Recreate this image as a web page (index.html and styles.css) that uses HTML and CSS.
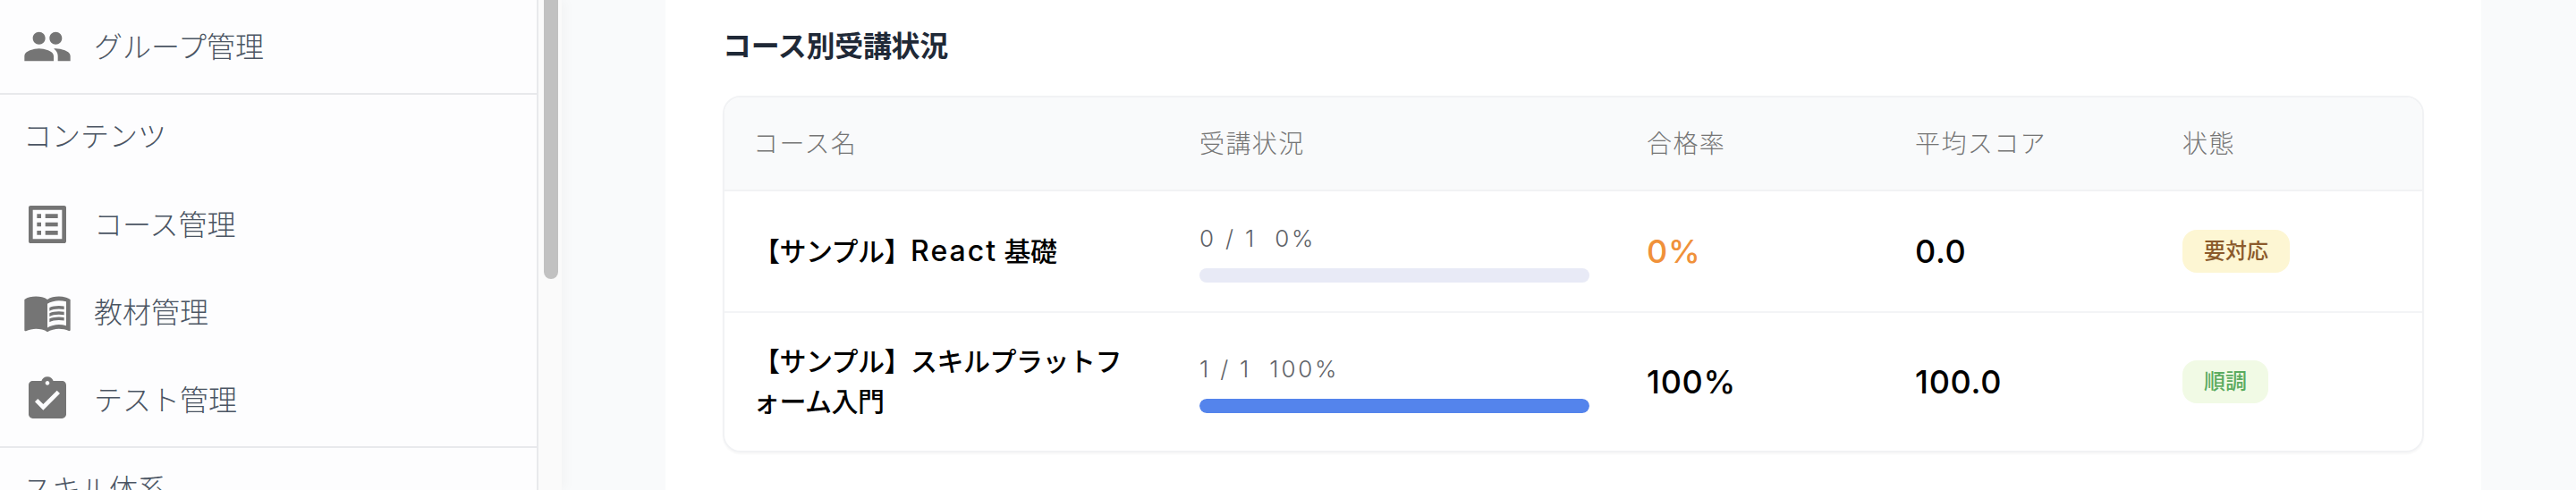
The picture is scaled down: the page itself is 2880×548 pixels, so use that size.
FILE: index.html
```html
<!DOCTYPE html>
<html lang="ja">
<head>
	<meta charset="UTF-8">
	<title>コース別受講状況</title>
	<link rel="stylesheet" href="styles.css">
</head>
<body>
	<aside class="sidebar">
		<nav class="nav">
			<div class="nav-group nav-group-first">
				<a class="nav-item">
					<svg class="nav-icon" viewBox="0 0 24 24"><path d="M16 11c1.66 0 2.99-1.34 2.99-3S17.66 5 16 5c-1.66 0-3 1.34-3 3s1.34 3 3 3zm-8 0c1.66 0 2.99-1.34 2.99-3S9.66 5 8 5C6.34 5 5 6.34 5 8s1.34 3 3 3zm0 2c-2.33 0-7 1.17-7 3.5V19h14v-2.5c0-2.33-4.67-3.5-7-3.5zm8 0c-.29 0-.62.02-.97.05 1.16.84 1.97 1.97 1.97 3.45V19h6v-2.5c0-2.33-4.67-3.5-7-3.5z"/></svg>
					<span class="nav-text">グループ管理</span>
				</a>
			</div>
			<div class="nav-group">
				<div class="nav-label">コンテンツ</div>
				<a class="nav-item">
					<svg class="nav-icon" viewBox="0 0 24 24"><path d="M19 5v14H5V5h14m1.1-2H3.9c-.5 0-.9.4-.9.9v16.2c0 .4.4.9.9.9h16.2c.4 0 .9-.5.9-.9V3.9c0-.5-.5-.9-.9-.9zM11 7h6v2h-6V7zm0 4h6v2h-6v-2zm0 4h6v2h-6zM7 7h2v2H7zm0 4h2v2H7zm0 4h2v2H7z"/></svg>
					<span class="nav-text">コース管理</span>
				</a>
				<a class="nav-item">
					<svg class="nav-icon" viewBox="0 0 24 24"><path d="M21 5c-1.11-.35-2.33-.5-3.5-.5-1.95 0-4.05.4-5.5 1.5-1.45-1.1-3.55-1.5-5.5-1.5S2.45 4.9 1 6v14.65c0 .25.25.5.5.5.1 0 .15-.05.25-.05C3.1 20.45 5.05 20 6.5 20c1.95 0 4.05.4 5.5 1.5 1.35-.85 3.8-1.5 5.5-1.5 1.65 0 3.35.3 4.75 1.05.1.05.15.05.25.05.25 0 .5-.25.5-.5V6c-.6-.45-1.25-.75-2-1zm0 13.5c-1.1-.35-2.3-.5-3.5-.5-1.7 0-4.15.65-5.5 1.5V8c1.35-.85 3.8-1.5 5.5-1.5 1.2 0 2.4.15 3.5.5v11.5z"/><path d="M17.5 10.5c.88 0 1.73.09 2.5.26V9.24c-.79-.15-1.64-.24-2.5-.24-1.7 0-3.24.29-4.5.83v1.66c1.13-.64 2.7-.99 4.5-.99zM13 12.49v1.66c1.13-.64 2.7-.99 4.5-.99.88 0 1.73.09 2.5.26V11.9c-.79-.15-1.64-.24-2.5-.24-1.7 0-3.24.3-4.5.83zM17.5 14.33c-1.7 0-3.24.29-4.5.83v1.66c1.13-.64 2.7-.99 4.5-.99.88 0 1.73.09 2.5.26v-1.52c-.79-.16-1.64-.24-2.5-.24z"/></svg>
					<span class="nav-text">教材管理</span>
				</a>
				<a class="nav-item">
					<svg class="nav-icon" viewBox="0 0 24 24"><path d="M19 3h-4.18C14.4 1.84 13.3 1 12 1c-1.3 0-2.4.84-2.82 2H5c-1.1 0-2 .9-2 2v14c0 1.1.9 2 2 2h14c1.1 0 2-.9 2-2V5c0-1.1-.9-2-2-2zm-7 0c.55 0 1 .45 1 1s-.45 1-1 1-1-.45-1-1 .45-1 1-1zm-2 14l-4-4 1.41-1.41L10 14.17l6.59-6.59L18 9l-8 8z"/></svg>
					<span class="nav-text">テスト管理</span>
				</a>
			</div>
			<div class="nav-group">
				<div class="nav-label">スキル体系</div>
			</div>
		</nav>
		<div class="scrollbar"><div class="scrollbar-thumb"></div></div>
	</aside>

	<main class="main">
		<section class="card">
			<h2 class="card-title">コース別受講状況</h2>
			<div class="table-wrap">
				<table class="course-table">
					<colgroup>
						<col class="col-name">
						<col class="col-progress">
						<col class="col-rate">
						<col class="col-score">
						<col>
					</colgroup>
					<thead>
						<tr>
							<th>コース名</th>
							<th>受講状況</th>
							<th>合格率</th>
							<th>平均スコア</th>
							<th>状態</th>
						</tr>
					</thead>
					<tbody>
						<tr class="row-first">
							<td class="course-name">【サンプル】<span class="latin">React</span> 基礎</td>
							<td>
								<div class="progress-text">0 / 1&nbsp;&nbsp;0%</div>
								<div class="progress-bar"></div>
							</td>
							<td class="num num-warn">0%</td>
							<td class="num">0.0</td>
							<td><span class="badge badge-warn">要対応</span></td>
						</tr>
						<tr>
							<td class="course-name">【サンプル】スキルプラットフォーム入門</td>
							<td>
								<div class="progress-text">1 / 1&nbsp;&nbsp;100%</div>
								<div class="progress-bar"><div class="progress-fill" style="width: 100%"></div></div>
							</td>
							<td class="num">100%</td>
							<td class="num">100.0</td>
							<td><span class="badge badge-ok">順調</span></td>
						</tr>
					</tbody>
				</table>
			</div>
		</section>
	</main>
</body>
</html>
```

FILE: styles.css
```css
* {
	box-sizing: border-box;
}
html, body {
	margin: 0;
	height: 548px;
	overflow: hidden;
}
body {
	display: flex;
	font-family: Inter, "Noto Sans CJK JP", sans-serif;
	background-color: #f9fafb;
	color: #000;
}

/* sidebar */
.sidebar {
	display: flex;
	flex: none;
	width: 628px;
	height: 548px;
	background-color: #fafafa;
	box-shadow: 4px 0 12px rgba(0, 0, 0, 0.03);
}
.nav {
	width: 602px;
	background-color: #fdfdfe;
	border-right: 2px solid #e8e9ec;
	overflow: hidden;
}
.nav-group {
	border-bottom: 2px solid #e8e9ec;
	padding-bottom: 3px;
}
.nav-group-first {
	padding-top: 3px;
}
.nav-item {
	display: flex;
	align-items: center;
	gap: 24px;
	height: 98px;
	padding-left: 25px;
	font-size: 32px;
	font-weight: 300;
	color: #4b5563;
}
.nav-text {
	padding-bottom: 4px;
}
.nav-icon {
	flex: none;
	width: 56px;
	height: 56px;
	fill: #757575;
}
.nav-label {
	height: 96px;
	padding-left: 26px;
	font-size: 32px;
	font-weight: 300;
	line-height: 94px;
	color: #4b5563;
}
.scrollbar {
	flex: 1;
	padding-left: 6px;
}
.scrollbar-thumb {
	width: 16px;
	height: 312px;
	background-color: #c1c1c1;
	border-radius: 0 0 8px 8px;
}

/* main */
.main {
	flex: 1;
	padding: 0 106px 0 116px;
}
.card {
	height: 548px;
	padding: 28px 64px 0;
	background-color: #fff;
}
.card-title {
	margin: 0 0 31px;
	font-size: 32px;
	font-weight: 600;
	line-height: 48px;
	letter-spacing: -0.3px;
	color: #1f2937;
}
.table-wrap {
	border: 2px solid #f1f2f4;
	border-radius: 20px;
	box-shadow: 0 2px 2px rgba(0, 0, 0, 0.03);
	overflow: hidden;
}
.course-table {
	width: 100%;
	table-layout: fixed;
	border-collapse: collapse;
}
.col-name {
	width: 499px;
}
.col-progress {
	width: 500px;
}
.col-rate {
	width: 300px;
}
.col-score {
	width: 299px;
}
th {
	height: 104px;
	padding: 0 32px 3px;
	font-size: 28px;
	font-weight: 300;
	letter-spacing: 1.4px;
	text-align: left;
	color: #757575;
	background-color: #f9fafb;
	border-bottom: 2px solid #f1f2f4;
}
td {
	padding: 32px;
	vertical-align: middle;
}
.row-first td {
	height: 136px;
	padding-top: 0;
	padding-bottom: 0;
	border-bottom: 2px solid #f3f4f6;
}
.course-name {
	font-size: 30px;
	font-weight: 500;
	line-height: 45px;
	letter-spacing: -0.5px;
	line-break: loose;
}
.latin {
	font-size: 32px;
	letter-spacing: 2px;
}
.progress-text {
	margin-bottom: 14px;
	font-size: 26px;
	font-weight: 300;
	line-height: 39px;
	letter-spacing: 2.8px;
	color: #5f6368;
}
.progress-bar {
	height: 16px;
	background-color: #e8eaf6;
	border-radius: 8px;
	overflow: hidden;
}
.progress-fill {
	height: 100%;
	background-color: #5484ec;
	border-radius: 8px;
}
.num {
	font-size: 36px;
	font-weight: 500;
	letter-spacing: 0.7px;
}
.num-warn {
	color: #f0913a;
}
.badge {
	display: inline-block;
	height: 48px;
	padding: 0 24px;
	font-size: 24px;
	font-weight: 500;
	line-height: 48px;
	border-radius: 16px;
	vertical-align: middle;
}
.badge-warn {
	color: #8b5a2b;
	background-color: #fdf6d3;
}
.badge-ok {
	color: #5bab5f;
	background-color: #f1fae5;
}
```
